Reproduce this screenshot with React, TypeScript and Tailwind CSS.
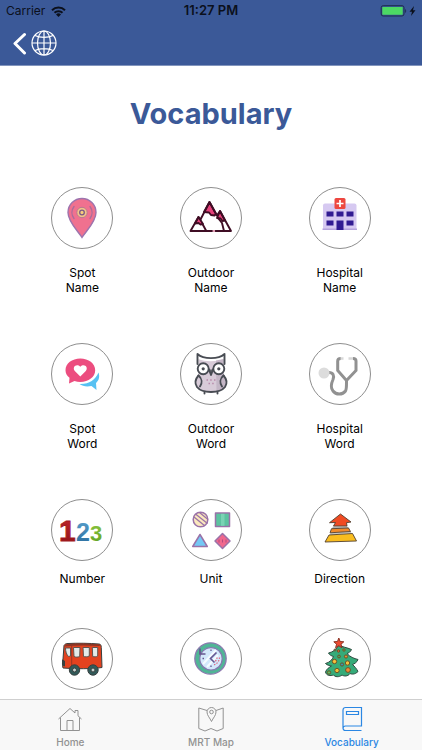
import type { ReactNode } from 'react';

const PinIcon = () => (
  <>
    <path d="M31 50.5C27 44 17 35 17 25.5a14 14 0 0 1 28 0C45 35 35 44 31 50.5z" fill="#f0718f" stroke="#9d74ae" strokeWidth="1.4" />
    <circle cx="31" cy="25.5" r="5.2" fill="#f2c48a" stroke="#b9788f" strokeWidth="1" />
    <circle cx="31" cy="25.5" r="2.3" fill="#f7cd7c" stroke="#7d5a86" strokeWidth="1.3" />
    <path d="M23 19.5a10 10 0 0 0 0 12M39 19.5a10 10 0 0 1 0 12" fill="none" stroke="#a96d9c" strokeWidth="1.4" strokeLinecap="round" />
  </>
);

const MountainIcon = () => (
  <g stroke="#3f0d24" strokeWidth="1.9" strokeLinejoin="round" strokeLinecap="round" fill="none">
    <path d="M29.500 15l6.500 12-1.500 1.500-3.500-.5-2-2.500-5-.5z" fill="#e5417a" />
    <path d="M40 24l5 9.500-2.500.5-2-2.500-3.500-.5z" fill="#e5417a" />
    <path d="M18.500 30l4.500 7-2.500.5-2-1.500-3.500.5z" fill="#e5417a" />
    <path d="M32 44H10.500l8-14 2 2.500L29.500 15 37 28.500l3-4.500L51 44H35.500" />
    <path d="M22.500 37l3.500 6.500M38 31l4 5 2 8" />
    <path d="M33.800 44h.1" stroke="#e58aa8" />
  </g>
);

const HospitalIcon = () => (
  <>
    <path d="M14 18.500a2 2 0 0 1 2-2h29.500a2 2 0 0 1 2 2V43H14z" fill="#d6c9f1" />
    <path d="M13.500 41.500h34.500V43H13.500z" fill="#b5a3dd" />
    <path d="M17.500 24.500h7v5h-7zM27.500 24.500h7v5h-7zM37.500 24.500h7v5h-7zM17.500 33.500h7v5h-7zM37.500 33.500h7v5h-7zM27.500 33.500h7V43h-7z" fill="#311b92" />
    <rect x="25.500" y="11" width="11" height="11" rx="1.500" fill="#ed4740" />
    <path d="M31 13v7M27.500 16.500h7" stroke="#fff" strokeWidth="1.700" />
  </>
);

const ChatIcon = () => (
  <>
    <path d="M47.500 29.500c1.500 4 .5 8-2.500 10.500l.5 7-5-4c-5 1-9 .3-12-2 9 .5 16-4 19-11.500z" fill="#57c1f2" />
    <path d="M29.300 15.500c8.300 0 14.900 5 14.900 11.700s-6.600 11.700-14.900 11.700c-2 0-4-.3-5.800-.9L18 40.500l.5-5.700c-2.500-2-4-4.600-4-7.600 0-6.700 6.500-11.700 14.800-11.700z" fill="#ec4d7f" />
    <path d="M29.300 33.500l-5.500-5.600c-3-3.500 1.500-8 5.500-4.200 4-3.800 8.500.7 5.500 4.200z" fill="#fff" />
  </>
);

const OwlIcon = () => (
  <>
    <path d="M18.500 16c6 3 19 3 25 0v15c3 5 3.500 10 1 13.500-3 4-8 5-13.500 5s-10.500-1-13.500-5c-2.500-3.500-2-8.500 1-13.500z" fill="#d8cbd8" />
    <path d="M36 17.500l7.500-1.500v15c3 5 3.500 10 1 13.500-2 2.500-4 4-8 4.500z" fill="#c4b6c6" />
    <g fill="none" stroke="#484c53" strokeWidth="1.900" strokeLinecap="round" strokeLinejoin="round">
      <path d="M17.500 21V11c6 5.500 21 5.500 27 0v10" />
      <path d="M18.500 32.500c-3.500 4-3.500 8.500-1.500 11.500 3 3.800 8 5 14 5s11-1.200 14-5c2-3 2-7.500-1.500-11.500" />
      <path d="M18.500 32.500c3.500 3 4 7.500 1.500 11M43.500 32.500c-3.500 3-4 7.500-1.500 11M24.500 49.500v1M37.500 49.500v1" />
      <circle cx="23.200" cy="25.800" r="5.500" fill="#fff" />
      <circle cx="38.800" cy="25.800" r="5.500" fill="#fff" />
      <path d="M29 26.500l2 5.500 2-5.500" fill="#6a6c72" />
    </g>
    <circle cx="23.200" cy="25.800" r="1.600" fill="#484c53" />
    <circle cx="38.800" cy="25.800" r="1.600" fill="#484c53" />
    <path d="M26.500 37H28M30.200 37h1.500M34 37h1.500M28.500 40.500H30M32.200 40.500h1.500" stroke="#b98aab" strokeWidth="1.500" />
  </>
);

const StethoscopeIcon = () => (
  <>
    <path d="M20 29.500c4 0 5.500 3 4 7C22 41 21.500 45 24 48c3 4 9.500 4 12.500 0 1.200-2 1-6 1-10.500L28.700 27.500V18c0-1.700.8-2.500 3-2.500" fill="none" stroke="#919191" strokeWidth="3" />
    <path d="M37.500 37.500l9.500-10V18c0-1.700-.8-2.500-3-2.500" fill="none" stroke="#919191" strokeWidth="3" />
    <path d="M32 15.500h2.500M39.500 15.500H44" stroke="#d8d8d8" strokeWidth="2.400" />
    <circle cx="15" cy="30" r="5.500" fill="#dcdcdc" />
  </>
);

const NumberIcon = () => (
  <>
    <defs>
      <linearGradient id="n1" x1="0" y1="0" x2="0" y2="1">
        <stop offset="0" stopColor="#c62a2c" />
        <stop offset="1" stopColor="#8c1116" />
      </linearGradient>
      <linearGradient id="n2" x1="0" y1="0" x2="0" y2="1">
        <stop offset="0" stopColor="#5ba3cf" />
        <stop offset="1" stopColor="#286b9c" />
      </linearGradient>
      <linearGradient id="n3" x1="0" y1="0" x2="0" y2="1">
        <stop offset="0" stopColor="#8cc63f" />
        <stop offset="1" stopColor="#5d9f24" />
      </linearGradient>
    </defs>
    <g fontFamily="Liberation Sans, sans-serif" fontWeight="700">
      <text x="8" y="42" fontSize="30" fill="url(#n1)" stroke="#a51b1f" strokeWidth=".8">1</text>
      <text x="25" y="42" fontSize="25" fill="url(#n2)">2</text>
      <text x="39" y="42" fontSize="22" fill="url(#n3)">3</text>
    </g>
  </>
);

const UnitIcon = () => (
  <g stroke="#9a72a8" strokeWidth="1.500" strokeLinejoin="round">
    <circle cx="20.500" cy="20.500" r="7.300" fill="#fbe8bd" />
    <path d="M14 18l11 9M15.500 15l12 9.500M19.500 13.500l8.500 7" strokeWidth="1.300" />
    <rect x="35.500" y="14" width="14" height="13.500" fill="#5cc3a0" />
    <path d="M41 14.800h3.500v12H41z" fill="#7ad3b4" stroke="none" />
    <path d="M20 35.500l7.300 12H12.700z" fill="#74c8f5" />
    <path d="M42.500 34.500L50 42l-7.500 7.500L35 42z" fill="#f0688d" />
    <path d="M39 40.500v3M42.500 40.500v3M46 40.500v3" strokeWidth="1" stroke="#b24a80" />
  </g>
);

const DirectionIcon = () => (
  <g stroke="#51402f" strokeWidth=".9" strokeLinejoin="round">
    <path d="M24 27.500h14.500l1.500 1.700-17 .6z" fill="#b4b4b2" stroke="none" />
    <path d="M21.500 34l20-1.500 1 1.500L21 36z" fill="#c8c8c4" stroke="none" />
    <path d="M31.500 15l10.500 8-4.500.7.5 3.300H24.500l2-3.500-6 .2z" fill="#f04b23" />
    <path d="M22.500 29.700l17-.7 2 3.500-20.500 1.300z" fill="#f08a2c" />
    <path d="M20 36l23.500-1.500 4 7.500-31.500 1z" fill="#f9bd1f" />
  </g>
);

const BusIcon = () => (
  <g stroke="#38403f" strokeWidth="1" strokeLinejoin="round">
    <path d="M13 17.500c1-1.500 2-2 4-2 9-.5 22-.3 31 .5 1.700 0 2.300 1.500 2.300 3.500l.7 20c-10 1.500-26 1.500-39 .5-.7-3-.7-6 0-9z" fill="#e3421f" />
    <path d="M14.500 16.500c8-1.500 24-1 34 0l.5 1.500c-12-.5-24-.8-35 .5z" fill="#8b3525" stroke="none" />
    <path d="M14.500 20h5v8l-2 .5c-2-2-3-5-3-8.500zM22.500 19.500h6.500l-.3 9c-2 .8-4 .8-5.700 0zM32 19.500h6.300v8.500c-2 1-4 1-5.800.5zM41.300 19.500h5.400v8.500c-1.500 1-3.500 1-5 .5z" fill="#e3ebe9" stroke="#5f5550" />
    <path d="M20.700 18v21" stroke="#9c3622" />
    <path d="M11.500 32l2 1v5l-2-1z" fill="#39403f" />
    <circle cx="23.500" cy="42" r="5.200" fill="#315a59" />
    <circle cx="42" cy="42" r="5.200" fill="#315a59" />
    <circle cx="23.500" cy="42" r="2" fill="#c4d1cf" />
    <circle cx="42" cy="42" r="2" fill="#c4d1cf" />
  </g>
);

const ClockIcon = () => (
  <>
    <circle cx="30.500" cy="30.500" r="15.700" fill="#50b596" stroke="#8d78b0" strokeWidth="1.300" />
    <circle cx="31" cy="30.800" r="11.200" fill="#d3e8fb" stroke="#8576ae" strokeWidth="1.200" />
    <path d="M23 36l13-14M27 39l11-12" stroke="#f5fbff" strokeWidth="2" />
    <path d="M20 20.500V26h5.500" fill="none" stroke="#66558f" strokeWidth="1.700" />
    <path d="M36.500 24.500l-6 6 4 4" fill="none" stroke="#665891" strokeWidth="1.600" />
    <path d="M31 21.500V23M31 37.500V39M22.500 30.500H24" stroke="#665891" strokeWidth="1.300" />
    <path d="M39.500 29.500a8 8 0 0 1-6 7.500M37 29.500a5 5 0 0 1-2 4" fill="none" stroke="#e0667f" strokeWidth="1.200" strokeDasharray="1.400 1.300" />
  </>
);

const TreeIcon = () => (
  <g stroke="#2e4a3f" strokeWidth="1" strokeLinejoin="round">
    <path d="M30 17c3 2 8 2.500 12.500 4.500-1 2.500-3 3.500-4.500 4 3 3.500 7 5 11 6-1 3-4 4.500-5.500 5 2 2 4 4 5.500 7-3 3-6 3-8 2-2 3-6 3-8 1.500-3 2.500-7 2-8.500 0-3 1-7 1-8-3 1-3 4-5 6-6-2-.5-5-1-6-2.500 4-1 7-4 8-7-2-.5-4-1.500-5-3.500 5-1 8-4 10.500-8z" fill="#35ab79" />
    <path d="M29.800 10l1.300 3.500 3.700.3-2.800 2.400 1 3.600-3.200-2-3.200 2 1-3.600-2.800-2.400 3.700-.3z" fill="#ec4b32" stroke="#8d3424" />
    <g fill="#f4c13a" stroke="#6b5427">
      <circle cx="25.500" cy="33.500" r="2.200" />
      <circle cx="38.500" cy="35" r="2.200" />
      <circle cx="28" cy="42.500" r="2.200" />
      <circle cx="39" cy="42" r="2.400" fill="#f08a35" />
      <circle cx="37" cy="28.500" r="1.600" fill="#e89236" />
      <circle cx="20" cy="44.500" r="1.700" fill="#5fbd62" />
      <circle cx="30" cy="28.500" r="1.400" fill="#4aa85e" />
      <circle cx="35" cy="22" r="1.200" fill="#6ab05c" />
      <circle cx="29.500" cy="23" r="1.200" fill="#d66a3b" />
      <circle cx="33" cy="36.500" r="1.600" fill="#3b93b4" />
      <circle cx="26" cy="22" r="1" fill="#3b93b4" />
    </g>
  </g>
);

interface Item {
  id: string;
  lines: string[];
  icon: ReactNode;
}

const wordItems: Item[] = [
  { id: 'spot name', lines: ['Spot', 'Name'], icon: <PinIcon /> },
  { id: 'outdoor name', lines: ['Outdoor', 'Name'], icon: <MountainIcon /> },
  { id: 'hospital name', lines: ['Hospital', 'Name'], icon: <HospitalIcon /> },
  { id: 'spot word', lines: ['Spot', 'Word'], icon: <ChatIcon /> },
  { id: 'outdoor word', lines: ['Outdoor', 'Word'], icon: <OwlIcon /> },
  { id: 'hospital word', lines: ['Hospital', 'Word'], icon: <StethoscopeIcon /> },
];

const basicItems: Item[] = [
  { id: 'number', lines: ['Number'], icon: <NumberIcon /> },
  { id: 'unit', lines: ['Unit'], icon: <UnitIcon /> },
  { id: 'direction', lines: ['Direction'], icon: <DirectionIcon /> },
  { id: 'transport', lines: [], icon: <BusIcon /> },
  { id: 'time', lines: [], icon: <ClockIcon /> },
  { id: 'festival', lines: [], icon: <TreeIcon /> },
];

const tabs = [
  {
    label: 'Home',
    active: false,
    icon: <path d="M1.500 13L13 2.500l5 4.500V4.500h3v5.300l3.500 3.200M3.500 11.500v13h19v-13M10 24.500v-10h6v10" />,
  },
  {
    label: 'MRT Map',
    active: false,
    icon: (
      <>
        <path d="M9 4.500L.8 2v20.500L7 25l6-2.500 6 2.500 6.200-2.500V2L18 4.500" />
        <path d="M13.500 15.500C12 12 9 9.500 9 6a4.500 4.500 0 0 1 9 0c0 3.500-3 6-4.500 9.500z" />
        <circle cx="13.500" cy="6" r="1.800" />
      </>
    ),
  },
  {
    label: 'Vocabulary',
    active: true,
    icon: (
      <path
        d="M22.500 24.500H6.500a2.500 2.500 0 0 1-2.500-2.500V4a2.500 2.500 0 0 1 2.500-2.500h16v18.500H6.500A2.500 2.500 0 0 0 4 22.500M7.500 5.500h12v3h-12z"
        strokeWidth="1.200"
      />
    ),
  },
];

function ItemButton({ item }: { item: Item }) {
  return (
    <button type="button" aria-label={item.lines.length ? undefined : item.id} className="flex flex-col items-center cursor-pointer">
      <span className="w-[62px] h-[62px] rounded-full border border-[#8e8e8e] bg-white flex items-center justify-center">
        <svg viewBox="1 1 60 60" className="w-[60px] h-[60px]" aria-hidden="true">
          {item.icon}
        </svg>
      </span>
      {item.lines.length > 0 && (
        <span className={`text-xs leading-[15px] text-black ${item.lines.length > 1 ? 'mt-4' : 'mt-[10px]'}`}>
          {item.lines.map((line) => (
            <span key={line} className="block">{line}</span>
          ))}
        </span>
      )}
    </button>
  );
}

export default function App() {
  return (
    <div className="h-screen flex flex-col overflow-hidden bg-white font-['Inter',sans-serif]">
      {/* Header */}
      <header className="shrink-0 bg-[#3b5998] border-b border-[#8295bd]">
        <div className="grid grid-cols-3 items-center h-[22px] px-[6px] text-xs text-[#0b101c]">
          <div className="flex items-center gap-[6px]">
            <span>Carrier</span>
            <svg viewBox="0 0 15 11" className="w-[15px] h-[11px]" aria-hidden="true">
              <g fill="none" stroke="#0b101c" strokeWidth="2">
                <path d="M1 4.200a9.300 9.300 0 0 1 13 0M3.500 6.800a5.700 5.700 0 0 1 8 0" />
              </g>
              <path d="M7.500 11L5 8.500a3.600 3.600 0 0 1 5 0z" fill="#0b101c" />
            </svg>
          </div>
          <span className="text-center text-[13px] font-semibold">11:27 PM</span>
          <div className="flex justify-end">
            <svg viewBox="0 0 36 12" className="w-9 h-3" aria-hidden="true">
              <rect x="1.200" y=".7" width="22.800" height="10.300" rx="2" fill="none" stroke="#1d2c4c" strokeWidth="1" />
              <rect x="2.300" y="2" width="20.400" height="7.700" rx=".6" fill="#4cd964" />
              <path d="M25.200 4c1.300.5 1.300 3.500 0 4z" fill="#1d2c4c" />
              <path d="M34 1l-4.500 5.700H32L31 11l4.500-5.800H33z" fill="#0b101c" />
            </svg>
          </div>
        </div>
        <div className="flex items-center gap-[3px] h-[43px] px-3 pb-[2px]">
          <button type="button" aria-label="Back" className="cursor-pointer">
            <svg viewBox="0 0 16 24" className="w-4 h-6" fill="none" stroke="#fff" strokeWidth="3" strokeLinecap="round" strokeLinejoin="round">
              <path d="M12.500 3.500L3 12.500l9.500 9.500" />
            </svg>
          </button>
          <button type="button" aria-label="Language" className="cursor-pointer">
            <svg viewBox="0 0 26 26" className="w-[26px] h-[26px]" fill="none" stroke="#fff" strokeWidth="1.200">
              <circle cx="13" cy="13" r="12" />
              <ellipse cx="13" cy="13" rx="6.500" ry="12" />
              <path d="M13 1v24M1 13h24M4 5.500c4.500 2.500 13.500 2.500 18 0M4 20.500c4.500-2.500 13.500-2.500 18 0" />
            </svg>
          </button>
        </div>
      </header>

      {/* Content */}
      <main className="flex-1 min-h-0 overflow-hidden">
        <h1 className="mt-7 text-center text-[29px] leading-10 font-bold text-[#3b5998]">Vocabulary</h1>
        <div className="grid grid-cols-3 gap-y-12 mt-[53px] px-[18px]">
          {wordItems.map((item) => (
            <ItemButton key={item.id} item={item} />
          ))}
        </div>
        <div className="grid grid-cols-3 gap-y-[42px] mt-12 px-[18px]">
          {basicItems.map((item) => (
            <ItemButton key={item.id} item={item} />
          ))}
        </div>
      </main>

      {/* Tab bar */}
      <nav className="shrink-0 grid grid-cols-3 h-[51px] bg-[#f8f8f8] border-t border-[#cfcfcf]">
        {tabs.map((tab) => (
          <a
            key={tab.label}
            href="#"
            aria-current={tab.active ? 'page' : undefined}
            className={`flex flex-col items-center pt-[6px] text-[10px] leading-3 font-medium ${tab.active ? 'text-[#2b87e3]' : 'text-[#929292]'}`}
          >
            <svg viewBox="0 0 26 26" className="w-[26px] h-[26px]" fill="none" stroke="currentColor" strokeWidth="1" aria-hidden="true">
              {tab.icon}
            </svg>
            <span className="mt-1">{tab.label}</span>
          </a>
        ))}
      </nav>
    </div>
  );
}
